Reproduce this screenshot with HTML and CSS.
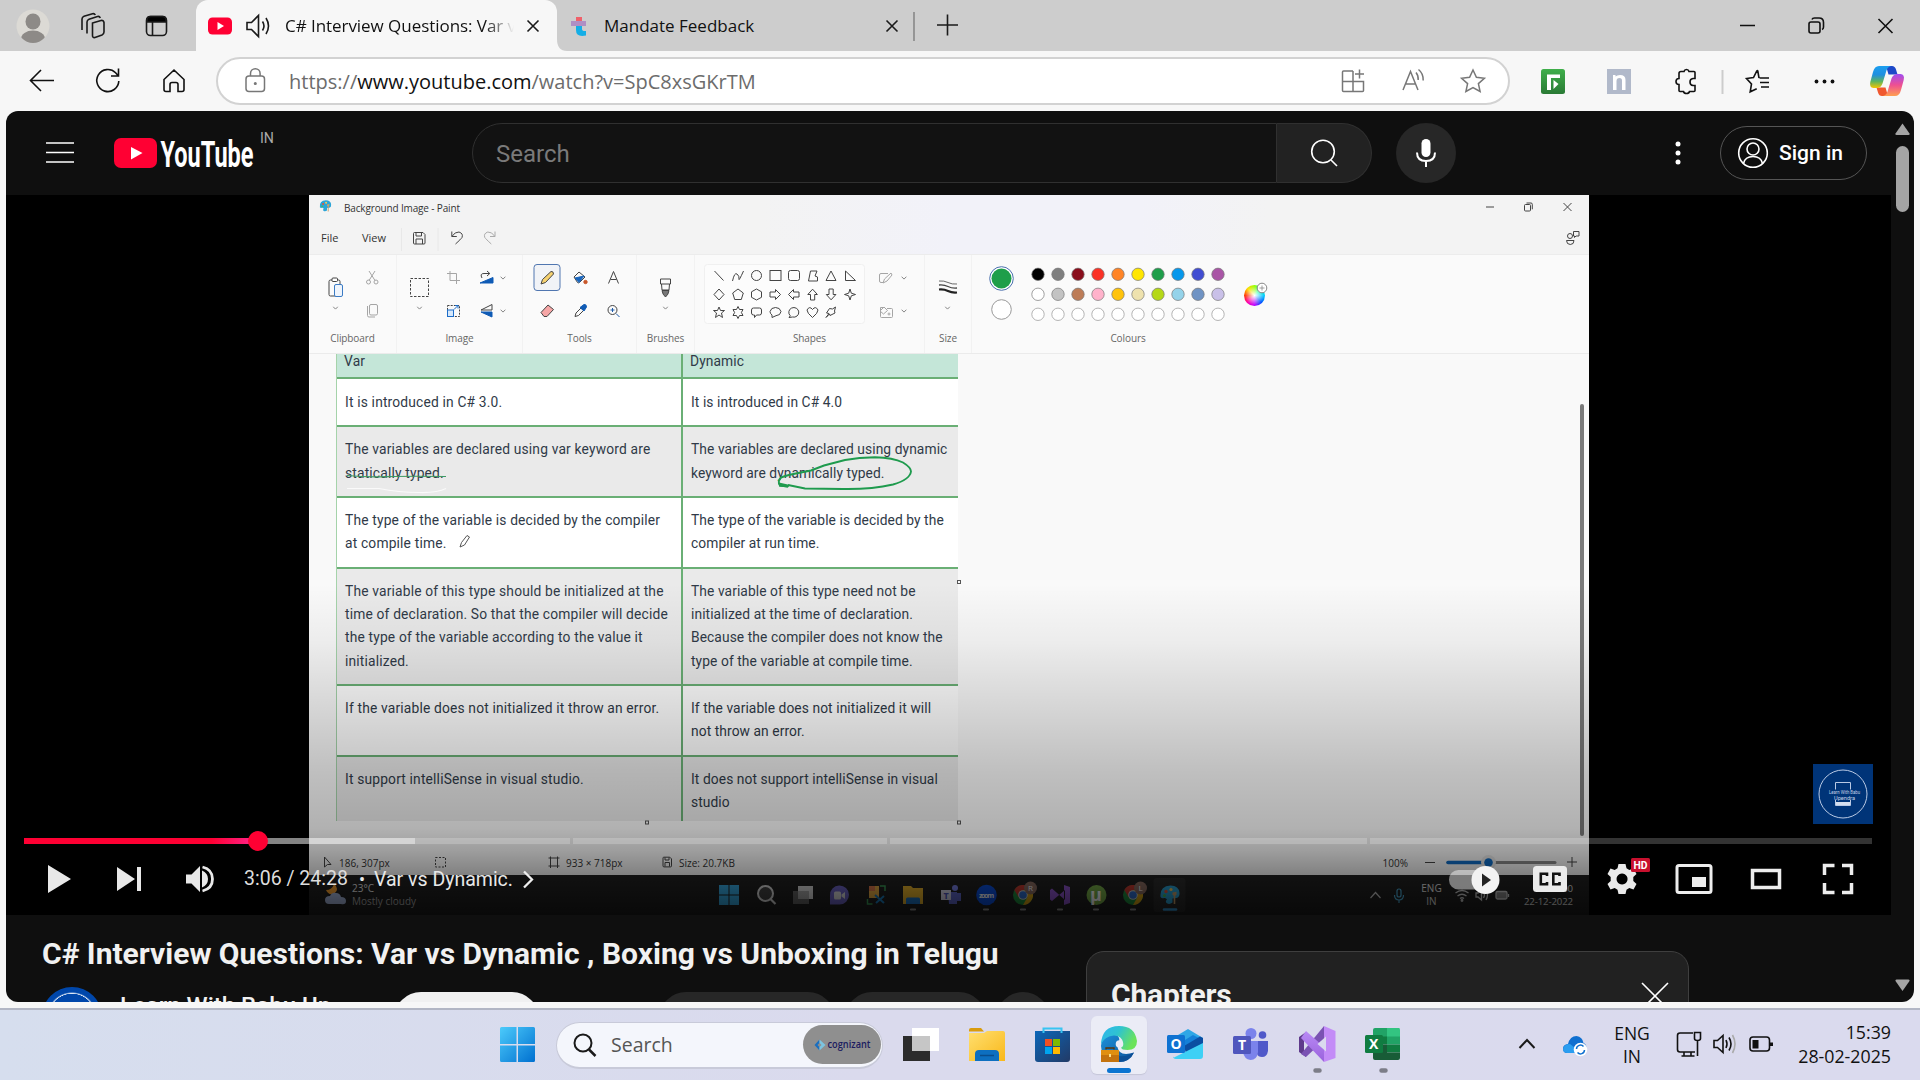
FILE: index.html
```html
<!DOCTYPE html>
<html lang="en">
<head>
<meta charset="utf-8">
<title>C# Interview Questions: Var vs Dynamic - YouTube</title>
<link rel="stylesheet" href="styles.css">
</head>
<body>
<svg width="0" height="0" class="defs">
  <defs>
    <linearGradient id="win" x1="0" y1="0" x2="1" y2="1"><stop offset="0" stop-color="#4ccbfb"/><stop offset="1" stop-color="#0070d0"/></linearGradient>
    <linearGradient id="fold" x1="0" y1="0" x2="1" y2="1"><stop offset="0" stop-color="#ffdf70"/><stop offset="1" stop-color="#f9b81a"/></linearGradient>
    <linearGradient id="store" x1="0" y1="0" x2="1" y2="1"><stop offset="0" stop-color="#0b66b8"/><stop offset="1" stop-color="#223a66"/></linearGradient>
    <linearGradient id="edgeTop" x1="0" y1="0" x2="1" y2=".4"><stop offset="0" stop-color="#2db4f0"/><stop offset=".5" stop-color="#2fc3d0"/><stop offset="1" stop-color="#6be35a"/></linearGradient>
    <linearGradient id="edgeLow" x1="0" y1="0" x2="1" y2="1"><stop offset="0" stop-color="#1d93dc"/><stop offset="1" stop-color="#0c4f97"/></linearGradient>
    <linearGradient id="vs" x1="0" y1="0" x2="0" y2="1"><stop offset="0" stop-color="#b98af5"/><stop offset="1" stop-color="#9a62dd"/></linearGradient>
    <linearGradient id="cop1" x1="0" y1="0" x2="0" y2="1"><stop offset="0" stop-color="#1b9ff0"/><stop offset=".4" stop-color="#1f8fe0"/><stop offset=".7" stop-color="#5cb460"/><stop offset="1" stop-color="#f5c400"/></linearGradient>
    <linearGradient id="cop2" x1="0" y1="0" x2="0" y2="1"><stop offset="0" stop-color="#a04cf0"/><stop offset=".5" stop-color="#ee4f92"/><stop offset="1" stop-color="#ffa050"/></linearGradient>
    <linearGradient id="ext" x1="0" y1="0" x2="0" y2="1"><stop offset="0" stop-color="#3faf4a"/><stop offset="1" stop-color="#2a7a35"/></linearGradient>
    <symbol id="chev" viewBox="0 0 6 4"><path d="M.6.7 3 3.1 5.4.7" fill="none" stroke="currentColor" stroke-width=".9"/></symbol>
    <symbol id="chrome" viewBox="0 0 20 20"><circle cx="10" cy="10" r="10" fill="#1e8e3e"/><path d="M1.300 5A10 10 0 0 1 18.700 5H10L5.700 12.500Z" fill="#c5392f"/><path d="M18.700 5A10 10 0 0 1 10 20l4.300-7.500L10 5Z" fill="#d9a514"/><circle cx="10" cy="10" r="4.800" fill="#ccc"/><circle cx="10" cy="10" r="3.800" fill="#2f6fd0"/></symbol>
    <symbol id="palette" viewBox="0 0 20 20"><path d="M.5 12Q-.5 1 10.500.5 19 .5 19.500 8q.3 4-3 5l-4 .5v4q-3 2.500-6 .5-1.500-1.500.5-3.500-1-2-3-1.500-2 .8-3.500-1z" fill="#2ba5d8"/><circle cx="6" cy="6.500" r="1.700" fill="#e2553d"/><circle cx="11" cy="4.500" r="1.600" fill="#fc5"/><circle cx="4.500" cy="10.500" r="1.500" fill="#4b5"/><path d="m12.500 7.500 4-.8v3l-1.200 1V19h-1.600v-8.300l-1.200-1z" fill="#c9a06c"/></symbol>
  </defs>
</svg>

<div class="tabs">
  <svg width="65" height="51"><clipPath id="av"><ellipse cx="33" cy="26" rx="16" ry="17"/></clipPath><circle cx="33" cy="26" r="16.500" fill="#dcdad5"/><g clip-path="url(#av)" fill="#8d8a87"><ellipse cx="33" cy="21.500" rx="7.500" ry="8"/><ellipse cx="33" cy="39" rx="12" ry="8.500"/></g></svg>
  <svg width="60" height="51" viewBox="65 0 60 51" class="line"><path d="m92.500 23 8.500-2.500q2.500-.5 3 2v9.500q0 2-2 3l-7 2.500q-2.500.5-2.500-2zM87 33.500V22q0-2 2-2.800l8.500-2.700q2-.5 2.800 1.500M82 30V19q0-2 2-2.800l8.500-2.500q2-.4 2.800 1.300"/></svg>
  <svg width="71" height="51" viewBox="125 0 71 51" class="line"><rect x="146.500" y="16.500" width="20" height="19" rx="4"/><path d="M147 22v-2q0-3.500 3.500-3.500h12q3.500 0 3.500 3.500v2z" fill="#000"/><path d="M152.500 22v13"/></svg>
  <div class="tab active">
    <svg width="89" height="51" viewBox="196 0 89 51"><rect x="208" y="17.500" width="24" height="17" rx="4.500" fill="#ff0033"/><path d="m217.500 22 6.500 4-6.500 4z" fill="#fff"/><g class="line"><path d="M247 22.500h4.500l7-7v21l-7-7H247zM262.500 21.500q3 4.500 0 9M266 18q5 8 0 16"/></g></svg>
    <span class="tab-title fade">C# Interview Questions: Var vs</span>
    <svg width="43" height="51" viewBox="514 0 43 51" class="line"><path d="m527.500 20.500 11 11m0-11-11 11"/></svg>
  </div>
  <div class="tab">
    <svg width="47" height="51" viewBox="557 0 47 51"><path d="M557 39v12h10q-10 0-10-12z" fill="#f7f7f7"/><path d="M576 17h6v7h-6z" fill="#f0606a"/><path d="M571 21h15v5h-15z" fill="#b08fc4"/><path d="M576 26h6v3q0 2.500 4 2v4.500q-10 2-10-5.500z" fill="#14aee6"/></svg>
    <span class="tab-title second">Mandate Feedback</span>
    <svg width="160" height="51" viewBox="755 0 160 51" class="line"><path d="m886.500 20.500 11 11m0-11-11 11"/><path d="M914 12v29" stroke="#888"/></svg>
  </div>
  <svg width="60" height="51" viewBox="915 0 60 51" class="line"><path d="M937 25h21M947.500 14.500v21"/></svg>
  <div class="grow"></div>
  <svg width="200" height="51" viewBox="1720 0 200 51" class="line dark"><path d="M1740 25.500h15M1878.500 19l14 14m0-14-14 14"/><rect x="1809" y="22" width="11" height="11" rx="2"/><path d="M1812 19.500q.5-1.500 2.500-1.500h4.500q4.500 0 4.500 4.500v4.500q0 2-1.500 2.500"/></svg>
</div>

<div class="toolbar">
  <svg width="216" height="60" viewBox="0 51 216 60" class="line dark"><path d="M54 80.500H31M41 70 30.500 80.500 41 91M118.800 81a11 11 0 1 1-3.200-8.200L118 75.500M118.500 68.500v7.500h-7.500M164 79.500l10-9.500 10 9.500v10q0 2-2 2h-4v-7q0-2-2-2h-4q-2 0-2 2v7h-4q-2 0-2-2z"/></svg>
  <div class="address">
    <svg width="71" height="44" viewBox="218 59 71 44" class="line grey"><rect x="246" y="76" width="18.500" height="15.500" rx="3"/><path d="M250.500 76v-2.500a4.800 4.800 0 0 1 9.600 0V76"/><circle cx="255.300" cy="83.500" r=".8"/></svg>
    <span class="url">https://<b>www.youtube.com</b>/watch?v=SpC8xsGKrTM</span>
    <div class="grow"></div>
    <svg width="181" height="44" viewBox="1327 59 181 44" class="line grey"><path d="M1353 71h-9.500q-1 0-1 1v18.500q0 1 1 1h19q1 0 1-1V81.500h-21M1353 71v20.500M1359.500 69.500v9m-4.500-4.500h9"/><path d="m1403 90 7.500-18.500 7.500 18.500M1405.800 84h9.500M1416 72.500q2.500 3 2.200 7.500M1418.500 69.500q5 4 4.700 11"/><path d="m1473 70 3.400 7.300 8 .9-6 5.400 1.700 7.900-7.100-4-7.100 4 1.700-7.900-6-5.400 8-.9z"/></svg>
  </div>
  <svg width="410" height="60" viewBox="1510 51 410 60"><rect x="1541" y="69" width="24" height="25" rx="2.500" fill="url(#ext)"/><path d="M1547 90V74.500h13v3.500h-9V90z" fill="#fff"/><path d="m1553.500 80 5 4-5 5z" fill="#fff"/><rect x="1607" y="69" width="24" height="25" fill="#b1b9ca"/><path d="M1613 90V75h2.500v1.500Q1617 75 1620 75q5.500 0 5.500 5v10h-3.500V80.500q0-2.500-2.500-2.500-3 0-3 3V90z" fill="#fff"/>
    <g class="line dark"><path d="M1679 73.500q0-2 2-2h3q.5-2 2.500-2t2.500 2h5q1 0 1 1v6h-2q-3 .3-3 3.500t3 3.500h2v5q0 1-1 1h-4.500q-.5 2-3 2t-3-2h-3.500q-1 0-1-1v-6q-3 0-3-3t3-3z"/><path d="m1769 82.500h-9m9-4.500h-9.500m9.500 9h-8M1759 78l-1.200-7q-.3-.8-1 0l-3.300 6.500-7 1 5 5.500-1.300 7.800 6.500-3"/></g>
    <path d="M1722.500 70v24" stroke="#ccc" stroke-width="2"/><g fill="#111"><circle cx="1816.500" cy="81.500" r="1.900"/><circle cx="1824.500" cy="81.500" r="1.900"/><circle cx="1832.500" cy="81.500" r="1.900"/></g>
    <path d="M1886 66h6q3 0 4 3.500l1.500 5h-9z" fill="#1d48c8"/><path d="M1888 96h-6q-3 0-4-3.500l-1.500-5h9z" fill="#f0582f"/><path d="M1879 66h12q-4 1-5 6l-3.500 11.500q-1.500 4-5 4.500h-4q-4.500-.5-3.200-6l2.700-10q1.500-6 6-6z" fill="url(#cop1)"/><path d="M1895 96h-12q4-1 5-6l3.500-11.500q1.500-4 5-4.500h4q4.500.5 3.200 6l-2.700 10q-1.500 6-6 6z" fill="url(#cop2)"/></svg>
</div>

<div class="page">
  <div class="masthead">
    <svg width="274" height="84" viewBox="6 111 274 84"><path d="M46 143h28M46 152.500h28M46 162h28" stroke="#fff" stroke-width="1.600"/><rect x="114" y="138" width="43" height="30" rx="7" fill="#ff0033"/><path d="m131 147 11.500 6-11.500 6.500z" fill="#fff"/><text x="160.500" y="167" class="wordmark" textLength="93" lengthAdjust="spacingAndGlyphs">YouTube</text><text x="260" y="143" class="country" textLength="14" lengthAdjust="spacingAndGlyphs">IN</text></svg>
    <div class="search-box">Search</div>
    <div class="search-btn"><svg width="30" height="30" viewBox="1309 138 30 30" class="line white"><circle cx="1323" cy="151.500" r="11.300"/><path d="m1331 160 6 6"/></svg></div>
    <div class="mic"><svg width="30" height="32" viewBox="1411 137 30 32"><rect x="1421.500" y="139" width="9" height="18" rx="4.500" fill="#fff"/><path d="M1417 152.500q0 8.500 9 8.500t9-8.500M1426 161v6" fill="none" stroke="#fff" stroke-width="2"/></svg></div>
    <div class="grow"></div>
    <svg width="62" height="84" viewBox="1658 111 62 84" fill="#fff"><circle cx="1678" cy="144" r="2.500"/><circle cx="1678" cy="153" r="2.500"/><circle cx="1678" cy="162" r="2.500"/></svg>
    <div class="signin"><svg width="32" height="32" viewBox="1737 137 32 32" class="line white"><circle cx="1753" cy="153" r="14.300"/><circle cx="1753" cy="149" r="6"/><path d="M1743.500 163.500q1.500-7 9.500-7t9.500 7"/></svg><span>Sign in</span></div>
  </div>

  <div class="player">
    <div class="frame">
      <div class="p-title">
        <svg width="35" height="27" viewBox="309 195 35 27"><use href="#palette" x="319.500" y="200" width="12" height="12"/></svg>
        <span>Background Image - Paint</span><div class="grow"></div>
        <svg width="109" height="27" viewBox="1480 195 109 27" class="thin"><path d="M1486 207h8M1563.500 203l8 8m0-8-8 8"/><rect x="1524.500" y="204.500" width="6" height="6.500" rx="1"/><path d="M1526.500 203h4.500q1.300 0 1.300 1.300v5"/></svg>
      </div>
      <div class="p-menu">
        <span class="m-file">File</span><span class="m-view">View</span>
        <svg width="110" height="34" viewBox="396 221 110 34" class="thin"><path d="M401.500 228v23M438 228v23" stroke="#e8e8e8"/><path d="M413.500 233.500q0-1 1-1h8.500l2 2v8.500q0 1-1 1h-9.500q-1 0-1-1zM416 233v3h5.500v-3M416 244v-5h6.500v5"/><path d="M451.800 231.500v5h5M452 236.300q3-4.600 7-4.300 4.500 1.500 3 5.500-1 1.500-6.500 6.500"/><path d="M495 231.500v5h-5M494.800 236.300q-3-4.600-7-4.300-4.500 1.500-3 5.500 1 1.500 6.500 6.500" stroke="#aaa"/></svg>
        <div class="grow"></div>
        <svg width="30" height="34" viewBox="1559 221 30 34" class="thin"><circle cx="1570" cy="236" r="2.500"/><path d="M1566.500 240.500h7.500q0 4-3.700 4t-3.800-4zM1573.500 231.500h5.500v4.500h-3l-1.500 1.500v-1.500h-1z"/></svg>
      </div>
      <div class="ribbon">
        <div class="group g-clip"><svg width="87" height="75" viewBox="309 255 87 75" class="thin"><rect x="329" y="280" width="11" height="16" rx="1.500"/><rect x="332" y="278" width="5.500" height="3.500" rx="1" fill="#fff"/><rect x="334.500" y="284.500" width="8" height="12" rx="1.500" fill="#eef4fc" stroke="#3b7bc4"/><use href="#chev" x="332.500" y="306" width="6" height="4"/><g stroke="#a5a5a5"><path d="m369 271 6 9.500m0-9.500-6 9.500"/><circle cx="368.500" cy="282" r="2"/><circle cx="376" cy="282" r="2"/><rect x="369.500" y="304.500" width="8" height="10.500" rx="1.500"/><path d="M367.500 306v9.500q0 1.500 1.500 1.500h6"/></g></svg><label>Clipboard</label></div>
        <div class="group g-img"><svg width="126" height="75" viewBox="397 255 126 75" class="thin"><rect x="410.500" y="278.500" width="18" height="18" stroke-dasharray="2.500 1.500"/><use href="#chev" x="416.500" y="306" width="6" height="4"/><path d="M450 271v9.500h10M447 273.500h9.500V284" stroke="#a5a5a5"/><path d="M480 283h13v-5.500z" fill="#0f5bb5" stroke="#0f5bb5"/><path d="M482 278q-2.500-4.500 2-4.500h5.500M487 271l2.800 2.500-2.800 2.500"/><use href="#chev" x="500" y="276" width="6" height="4"/><rect x="447.500" y="305.500" width="12" height="11" stroke-dasharray="2 1.200"/><rect x="447.500" y="310" width="6" height="6.500" stroke="#1c6cc8" fill="#d6e8fb"/><path d="m454 309.500 4-4m-3 0h3v3" stroke="#1c6cc8"/><path d="M492 304.500v5.500h-11z"/><path d="M492 317v-5h-11z" fill="#0f5bb5" stroke="#0f5bb5"/><use href="#chev" x="500" y="309" width="6" height="4"/></svg><label>Image</label></div>
        <div class="group g-tools"><svg width="114" height="75" viewBox="523 255 114 75" class="thin"><rect x="534" y="264.500" width="26" height="26" rx="3" fill="#f1f3f7" stroke="#5076b0"/><path d="m541 284 1.500-4.500 8.500-8q2.500-.5 2.500 2.500l-8 8.500z" fill="#f6d270"/><path d="m574 277 5-5 6 5-5.500 5.500q-1 .8-2 0z"/><path d="m575 278 9-2-5 6.500z" fill="#1865bd" stroke="#1865bd"/><circle cx="585.500" cy="282" r="1.700" fill="#c9572a" stroke="#c9572a"/><path d="m608.500 283.500 5-12 5 12M610.500 279.500h6"/><path d="m541 312.500 7-7.500 5.500 4.500-6.500 7h-3z" fill="#f6a6a6"/><path d="m575 316.500 1-3.500 5-5 2.500 2.500-5 5z"/><path d="m580 307.500 4-3q2.500-.5 2.500 2.500l-2.500 4z" fill="#0f5bb5" stroke="#0f5bb5"/><circle cx="612.500" cy="310" r="4.500"/><path d="m616 313.500 3.500 3.500M610.500 310h4m-2-2v4" stroke="#1c5aa8"/></svg><label>Tools</label></div>
        <div class="group g-brush"><svg width="58" height="75" viewBox="637 255 58 75" class="thin"><path d="M660.500 279h10v5h-10zM661.500 284l.5 6h7l.5-6"/><path d="M662 290.500h7q-.5 4-3.500 6.500-3-2.500-3.500-6.500z" fill="#777"/><use href="#chev" x="662.500" y="306" width="6" height="4"/></svg><label>Brushes</label></div>
        <div class="group g-shapes"><svg width="230" height="75" viewBox="695 255 230 75" class="thin"><rect x="704.500" y="264.500" width="160" height="59" rx="3" stroke="#f0f0f0" fill="#fcfcfc"/>
          <path d="m714.500 271 9 9.500M732.500 281q2-9 4.500-7t2 5 4.500-8"/><circle cx="756.500" cy="275.500" r="5"/><rect x="770" y="270.500" width="11" height="10"/><rect x="788.500" y="270.500" width="11" height="10" rx="2"/><path d="M808.500 281l2-10h6.500l-2 5 2.500 1v4zM831 271l5 9.500h-10zM845.500 271v9.500h10z"/>
          <path d="m719 289 5 5.500-5 5.500-5-5.500zM738 289l5.300 4-2 6.500h-6.600l-2-6.500zM756.500 289l5 2.800v5.500l-5 2.700-5-2.700v-5.500zM770 292h5.500v-2.500l5 5-5 5V297H770zM799 292h-5.500v-2.500l-5 5 5 5V297h5.500zM810.500 300v-5.500h-2.700l4.800-5.300 4.800 5.300h-2.700v5.500zM829 289v5.500h-2.700l4.800 5.300 4.800-5.300h-2.700V289zM850 289l1.300 4.200 4.200 1.300-4.200 1.300L850 300l-1.300-4.200-4.200-1.300 4.200-1.300z"/>
          <path d="m719 307 1.500 3.500h4l-3 2.500 1 4.500-3.500-2.500-3.500 2.500 1-4.500-3-2.500h4zM738 306.500l1.500 3h3.500l-1.600 3 1.600 3h-3.500l-1.500 3-1.500-3H733l1.600-3-1.600-3h3.500zM753.500 308h6q2 0 2 2v3q0 2-2 2h-3l-2 2.500V315h-1q-2 0-2-2v-3q0-2 2-2zM772 317.500v-2.500q-2-1.500-2-3.500 1-4 5.500-4t5.500 4q-.5 4-5 4.200zM789 317.500l1.300-1.700a5 4.800 0 1 1 2.200 1.200zM812.500 317.500q-5.500-4.500-5.500-7.500 2.500-4.500 5.500-.5 3-4 5.500.5 0 3-5.500 7.500zM826 317.500l3-4-2.500-.5 3-4.500 3 .5 3-2-1 4 .5 2-5 2.500-.5-1.500z"/>
          <g stroke="#a5a5a5"><path d="M888 273.500h-7q-1.500 0-1.500 1.500v6q0 1.500 1.500 1.500h2M883 283l1.500-4 6.500-6 1 2-5 6z"/><path d="M883 307.500h-2.500v9q0 1 1 1h10q1 0 1-1v-7q0-1-1-1H887M880 311l4-4 3.500 3.500-4 3.500z"/><circle cx="889" cy="314" r="1"/></g><use href="#chev" x="901" y="276" width="6" height="4"/><use href="#chev" x="901" y="309" width="6" height="4"/></svg><label>Shapes</label></div>
        <div class="group g-size"><svg width="47" height="75" viewBox="925 255 47 75" class="thin"><path d="M939 281q5-.5 9 1.500t9 1.500" stroke-width=".8"/><path d="M939 285q5-.5 9 1.500t9 1.500" stroke-width="1.300"/><path d="M939 289.500q5-.5 9 1.500t9 1.500" stroke="#222" stroke-width="2.200"/><use href="#chev" x="944.500" y="306" width="6" height="4"/></svg><label>Size</label></div>
        <div class="group g-col">
          <svg width="314" height="75" viewBox="971 255 314 75"><circle cx="1001.500" cy="278.500" r="11.800" fill="#fff" stroke="#4a6fae"/><circle cx="1001.500" cy="278.500" r="10" fill="#1e9e4a"/><circle cx="1001.500" cy="309.500" r="9.800" fill="#fff" stroke="#999"/>
            <g stroke="#777" stroke-width=".7"><circle cx="1038" cy="274.300" r="6.200" fill="#000"/><circle cx="1058" cy="274.300" r="6.200" fill="#7f7f7f"/><circle cx="1078" cy="274.300" r="6.200" fill="#8a0e1c"/><circle cx="1098" cy="274.300" r="6.200" fill="#fb3226"/><circle cx="1118" cy="274.300" r="6.200" fill="#ff8426"/><circle cx="1138" cy="274.300" r="6.200" fill="#ffe600"/><circle cx="1158" cy="274.300" r="6.200" fill="#1e9e4a"/><circle cx="1178" cy="274.300" r="6.200" fill="#0698ec"/><circle cx="1198" cy="274.300" r="6.200" fill="#414dd2"/><circle cx="1218" cy="274.300" r="6.200" fill="#a955a6"/>
            <circle cx="1038" cy="294.300" r="6.200" fill="#fff"/><circle cx="1058" cy="294.300" r="6.200" fill="#c3c3c3"/><circle cx="1078" cy="294.300" r="6.200" fill="#bd7c57"/><circle cx="1098" cy="294.300" r="6.200" fill="#ffb2cb"/><circle cx="1118" cy="294.300" r="6.200" fill="#ffc30b"/><circle cx="1138" cy="294.300" r="6.200" fill="#eee2ae"/><circle cx="1158" cy="294.300" r="6.200" fill="#b5d817"/><circle cx="1178" cy="294.300" r="6.200" fill="#94d3ea"/><circle cx="1198" cy="294.300" r="6.200" fill="#6f93c4"/><circle cx="1218" cy="294.300" r="6.200" fill="#c9c0e8"/></g>
            <g fill="#fff" stroke="#aaa" stroke-width=".9"><circle cx="1038" cy="314.300" r="6.200"/><circle cx="1058" cy="314.300" r="6.200"/><circle cx="1078" cy="314.300" r="6.200"/><circle cx="1098" cy="314.300" r="6.200"/><circle cx="1118" cy="314.300" r="6.200"/><circle cx="1138" cy="314.300" r="6.200"/><circle cx="1158" cy="314.300" r="6.200"/><circle cx="1178" cy="314.300" r="6.200"/><circle cx="1198" cy="314.300" r="6.200"/><circle cx="1218" cy="314.300" r="6.200"/></g>
            <foreignObject x="1244" y="285" width="21" height="21"><div class="wheel"></div></foreignObject><circle cx="1262" cy="288" r="4.800" fill="#fff" stroke="#888"/><path d="M1259.500 288h5m-2.500-2.500v5" stroke="#888" stroke-width=".8"/></svg><label>Colours</label></div>
      </div>

      <div class="canvas">
        <div class="sheet">
          <div class="row head"><p>Var</p><p>Dynamic</p></div>
          <div class="row first"><p>It is introduced in C# 3.0.</p><p>It is introduced in C# 4.0</p></div>
          <div class="row alt"><p>The variables are declared using var keyword are<br>statically typed.</p><p>The variables are declared using dynamic<br>keyword are dynamically typed.</p></div>
          <div class="row"><p>The type of the variable is decided by the compiler<br>at compile time.</p><p>The type of the variable is decided by the<br>compiler at run time.</p></div>
          <div class="row alt"><p>The variable of this type should be initialized at the<br>time of declaration. So that the compiler will decide<br>the type of the variable according to the value it<br>initialized.</p><p>The variable of this type need not be<br>initialized at the time of declaration.<br>Because the compiler does not know the<br>type of the variable at compile time.</p></div>
          <div class="row"><p>If the variable does not initialized it throw an error.</p><p>If the variable does not initialized it will<br>not throw an error.</p></div>
          <div class="row alt last"><p>It support intelliSense in visual studio.</p><p>It does not support intelliSense in visual<br>studio</p></div>
        </div>
        <div class="grow"></div>
        <div class="vscroll"></div>
        <svg class="ink" width="1280" height="492" viewBox="309 353 1280 492"><path d="M347 475.500q20 2 40 1.200t59-.2" stroke="#3f9a62" stroke-width="1.200"/><path d="M347 488.500h32q20 4 40 4 18 .5 27-4" stroke="#fafafa" stroke-width="1.200"/><path d="M788 486.500l-8-1q-3-4 1-8 6-2.500 20-5l10-2 13-5 21-5.500q14-2.500 30-2.800 18 .3 28 5.300 8 5 8 9-1 8-18 13-22 5-50 4.500l-38-.5-17-3.500" stroke="#1f9b4e" stroke-width="1.900"/><path d="m779 482.500 11 2.500-2 2.500-9-1z" fill="#1f9b4e"/><path d="m460 547 1.500-4.500 5.500-7 2.500 1.500-5 8z" stroke="#555"/><g stroke="#555"><rect x="957.500" y="580.500" width="3" height="3"/><rect x="957.500" y="821" width="3" height="3"/><rect x="645.500" y="821" width="3" height="3"/></g></svg>
      </div>

      <div class="p-status">
        <svg width="30" height="30" viewBox="309 845 30 30" class="thin"><path d="M324.500 857v10l3-2.500h3.500z"/></svg><span class="s-pos">186, 307px</span>
        <svg width="180" height="30" viewBox="386 845 180 30" class="thin"><rect x="435.500" y="857.500" width="10" height="9.500" stroke-dasharray="2 1.500"/><path d="M550.500 856.500v11.500M557.500 856.500v11.500M548.500 858h11M548.500 866h11"/></svg><span class="s-dim">933 × 718px</span>
        <svg width="59" height="30" viewBox="620 845 59 30" class="thin"><path d="M663 858q0-.8.800-.8h6l1.700 1.700v7q0 1-1 1H664q-1 0-1-1zM665 857.500v2.500h4v-2.500M665 866.500v-4h4.500v4"/></svg><span>Size: 20.7KB</span>
        <div class="grow"></div><span class="s-zoom">100%</span>
        <svg width="180" height="30" viewBox="1409 845 180 30" class="thin"><path d="M1425 862.500h10M1567 862h10m-5-5v10"/><path d="M1448 862.500h107" stroke="#888" stroke-width="3" stroke-linecap="round"/><path d="M1448 862.500h36" stroke="#0f6cc4" stroke-width="3.500" stroke-linecap="round"/><circle cx="1488.500" cy="862.500" r="7.500" fill="#e6e6e6" stroke="none"/><circle cx="1488.500" cy="862.500" r="4.300" fill="#0f6cc4" stroke="none"/></svg>
      </div>
      <div class="p-task">
        <svg width="43" height="40" viewBox="309 875 43 40"><path d="M334 884q-2 6-8 6 2 5 7 4 4-2 4-5t-3-5z" fill="#ffa530"/><path d="M329 904q-4 0-4-4t5-4q2-4 6-3 4 0 5 4 5 0 5 4t-5 3z" fill="#aebfe6"/></svg>
        <div class="weather"><div>23°C</div><div class="dim">Mostly cloudy</div></div>
        <svg width="490" height="40" viewBox="700 875 490 40">
          <path d="M719 885h9.500v9.500H719zM729.500 885h9.500v9.500h-9.500zM719 895.500h9.500v9.500H719zM729.500 895.500h9.500v9.500h-9.500z" fill="#38aee8"/>
          <circle cx="765.500" cy="893.500" r="7.500" fill="#444" stroke="#ddd" stroke-width="2"/><path d="m770.500 899 5 5" stroke="#ddd" stroke-width="2.200"/>
          <path d="M793 891h16v13h-16z" fill="#666"/><path d="M798 886h15v13h-15z" fill="#ddd"/><path d="M798 891h11v8h-11z" fill="#aaa"/>
          <path d="M830 904.500v-9a9.500 9.500 0 1 1 9.500 9z" fill="#6f66c8"/><rect x="834" y="891.500" width="7" height="8" rx="1.500" fill="#ddd"/><path d="m841.500 894.500 3.500-2.500v7l-3.500-2.500z" fill="#ddd"/>
          <path d="M869 886h10v12h-10z" fill="#eab045"/><path d="M869 886h6v5h-6z" fill="#e07a4c"/><path d="M867.500 899v5h5M880 886h5v5" fill="none" stroke="#3ba05a" stroke-width="1.500"/><path d="m875 895 9 8m0-7-8 7" stroke="#1b7fc0" stroke-width="2"/>
          <path d="M903 886h8l2 2h10v16h-20z" fill="#eab52c"/><path d="M906 899q0-1.500 1.500-1.500h11q1.500 0 1.500 1.500v5h-14z" fill="#1e77c8"/>
          <circle cx="955" cy="888" r="3" fill="#7b83eb"/><path d="M948 892h9v12h-8zM957 893h4v8h-4z" fill="#6068cc"/><path d="M941 890h10v10h-10z" fill="#d8d8ec"/><text x="943.500" y="898.500" font-size="9" font-weight="700" fill="#4b53bc">T</text>
          <circle cx="986.500" cy="895" r="10.300" fill="#0b50e0"/><text x="979" y="897.500" font-size="7" font-weight="700" fill="#fff" textLength="15">zoom</text>
          <use href="#chrome" x="1013" y="885" width="20" height="20"/><circle cx="1030.500" cy="888" r="6.500" fill="#8d6e63"/><text x="1028" y="891" font-size="8" fill="#fff">R</text>
          <path d="m1050 890 2-1.500 13 11.500v-10l-13 11-2-1.500zM1064 885l6 2v16l-6 2z" fill="#8f55cf"/>
          <circle cx="1096.500" cy="895" r="10" fill="#79b04a"/><text x="1090" y="901" font-size="18" font-weight="700" fill="#fff">µ</text>
          <use href="#chrome" x="1123" y="885" width="20" height="20"/><circle cx="1140.500" cy="888" r="6.500" fill="#8d6e63"/><text x="1138.500" y="891" font-size="8" fill="#fff">L</text>
          <rect x="1153.500" y="878" width="32" height="34" rx="3" fill="#2b2b2b"/><use href="#palette" x="1160" y="885" width="20" height="20"/><path d="M1164 909.500h12" stroke="#36a3e6" stroke-width="2.500" stroke-linecap="round"/>
          <path d="M911 909.500h4M984 909.500h4M1021 909.500h4M1058 909.500h4M1094 909.500h4M1131 909.500h4" stroke="#999" stroke-width="2.200" stroke-linecap="round"/></svg>
        <div class="grow"></div>
        <svg width="45" height="40" viewBox="1368 875 45 40" fill="none" stroke="#ccc" stroke-width="1.200"><path d="m1370.500 898 5-5.500 5 5.500"/><rect x="1397" y="889" width="4" height="8" rx="2" stroke="#4fb0dc"/><path d="M1394.500 895q0 5 4.500 5t4.500-5M1399 900v3" stroke="#4fb0dc"/></svg>
        <div class="lang"><div>ENG</div><div>IN</div></div>
        <svg width="72" height="40" viewBox="1450 875 72 40" fill="none" stroke="#ccc" stroke-width="1.300"><path d="M1455.500 893q6.500-5 13 0M1457.500 896q4.500-3.500 9 0M1460 898.500q2-1.500 4 0"/><circle cx="1462" cy="900.500" r=".8"/><path d="M1476 893h2l3.500-3v10l-3.500-3h-2zM1483.500 892q2 3 0 6M1486 890q3 5 0 10"/><rect x="1496" y="891.500" width="11" height="7.500" rx="1.500" fill="#888"/><path d="M1508.500 894v3"/></svg>
        <div class="clock"><div>23:00</div><div>22-12-2022</div></div>
      </div>
    </div>

    <div class="shade"></div>
    <div class="watermark"><svg width="60" height="60"><g fill="none" stroke="#b9c9e4"><circle cx="30" cy="30" r="24"/><path d="M22.500 25.500v-7h15v7M22.500 36v5.500h15V36"/></g><path d="M23 38h14v3H23z" fill="#d5deee"/><text x="16" y="30" class="mark" textLength="31" lengthAdjust="spacingAndGlyphs">Learn With Babu</text><text x="21" y="35.500" class="mark" textLength="21" lengthAdjust="spacingAndGlyphs">Upendra</text></svg></div>
    <div class="controls">
      <div class="progress"><i class="c1"></i><i class="c2"></i><i class="c3"></i><i class="c4"></i><b class="loaded"></b><b class="played"></b><b class="knob"></b></div>
      <div class="buttons">
        <svg width="220" height="56" viewBox="24 851 220 56" fill="#e8e8e8"><path d="m48 865 23 14-23 14zM117 867l18 12-18 12zM137 867h4v24h-4zM186 874.500h5.500l8.500-8.500v26l-8.500-8.500H186zM202 870.500q6 2.500 6 8.500t-6 8.500z"/><path d="M202.500 867q10 2.500 10 12t-10 12" fill="none" stroke="#e8e8e8" stroke-width="2.800"/></svg>
        <span class="time">3:06 / 24:28</span><span class="bullet">•</span><span class="chap">Var vs Dynamic.</span>
        <svg width="24" height="56" viewBox="513 851 24 56"><path d="m524 871.500 8 8-8 8" fill="none" stroke="#eee" stroke-width="2.300"/></svg>
        <div class="grow"></div>
        <svg width="440" height="56" viewBox="1432 851 440 56"><rect x="1449" y="870" width="44" height="19.500" rx="9.500" fill="#fff" opacity=".45"/><circle cx="1485.500" cy="880" r="14" fill="#f2f2f2"/><path d="m1482 873.500 9 6.500-9 6.500z" fill="#222"/>
          <rect x="1533" y="866" width="34" height="26" rx="3.500" fill="#ebebeb"/><g fill="none" stroke="#111" stroke-width="2.600"><path d="M1547 876v-2.200h-6.200v10.400h6.200V882M1559.500 876v-2.200h-6.200v10.400h6.200V882"/></g>
          <path d="M1618.500 864h7l1 4.300 2.800 1.600 4.200-1.400 3 5.500-3.200 3v4l3.200 3-3 5.500-4.200-1.400-2.800 1.600-1 4.300h-7l-1-4.300-2.800-1.600-4.200 1.400-3-5.500 3.200-3v-4l-3.200-3 3-5.500 4.200 1.400 2.800-1.600zM1622 873.500a5.500 5.500 0 1 0 .1 0z" fill="#eaeaea" fill-rule="evenodd"/>
          <rect x="1631" y="858" width="19" height="14" rx="1.500" fill="#c8102e"/><text x="1633.500" y="869" class="hd" textLength="14" lengthAdjust="spacingAndGlyphs">HD</text>
          <g fill="none" stroke="#ededed" stroke-width="3"><rect x="1677" y="865.500" width="34" height="27" rx="2"/><rect x="1752.500" y="870.500" width="27" height="17" stroke-width="3.500"/><path d="M1824.500 875v-9.500h10M1842 865.500h9.500v9.500M1851.500 883v9.500h-9.500M1834.500 892.500h-10V883" stroke-width="3.500"/></g><path d="M1692 877h14v10h-14z" fill="#ededed"/></svg>
      </div>
    </div>
  </div>

  <div class="below">
    <div class="info">
      <h1>C# Interview Questions: Var vs Dynamic , Boxing vs Unboxing in Telugu</h1>
      <div class="owner">
        <div class="avatar"></div><span class="channel">Learn With Babu Up</span>
        <div class="pill sub"></div><div class="grow"></div><div class="pill like"></div><div class="pill share"></div><div class="pill more"></div>
      </div>
    </div>
    <div class="chapters"><span>Chapters</span><svg width="28" height="28" viewBox="0 0 28 28" class="line white"><path d="m1 1 26 26M27 1 1 27"/></svg></div>
  </div>

  <div class="scrollbar"><svg width="23" height="891" viewBox="1891 111 23 891" fill="#a5a5a5"><path d="m1902.500 123.500 7 10q.5 1.500-1 1.500h-12q-1.500 0-1-1.500z"/><rect x="1896" y="146" width="13" height="66" rx="6.500"/><path d="m1902.500 991 7-10q.5-1.500-1-1.500h-12q-1.500 0-1 1.500z"/></svg></div>
</div>

<div class="taskbar">
  <svg width="56" height="70" viewBox="500 1010 56 70"><path d="M500 1028.500q0-1.500 1.500-1.500H516.500v17H500zM518 1027h15.500q1.500 0 1.500 1.500v15.500H518zM500 1045.500h16.500v16.500h-15q-1.500 0-1.500-1.500zM518 1045.500h17v15q0 1.500-1.500 1.500H518z" fill="url(#win)"/></svg>
  <div class="tb-search"><svg width="24" height="24" viewBox="0 0 24 24" class="line"><circle cx="10" cy="10" r="8.500" stroke-width="2"/><path d="m16 16.500 6.500 6.500" stroke-width="2.500"/></svg><span>Search</span>
    <div class="badge"><svg width="78" height="39" viewBox="803 1025 78 39"><path d="m814.500 1045 5-5.500v3.500l-2 2 2 2v3.500z" fill="#1a6fc0"/><path d="m819.500 1039.500 6 5.500-6 5.500v-3.500l2-2-2-2z" fill="#7cc4e0"/><text x="827.500" y="1048" class="cogn" textLength="43" lengthAdjust="spacingAndGlyphs">cognizant</text></svg></div></div>
  <svg width="208" height="70" viewBox="883 1010 208 70"><path d="M903 1036h27v25h-27z" fill="#2c2c2c"/><path d="M912 1028h27v23h-27z" fill="#fff"/><path d="M912 1036h18v15h-18z" fill="#c6c6c6"/>
    <path d="M969 1030q0-2 2-2h10l3 3.500h-15z" fill="#d99b0c"/><path d="M969 1033h15l3-2h16q2 0 2 2v28h-36z" fill="url(#fold)"/><path d="M975 1061v-7q0-4 4-4h16q4 0 4 4v7z" fill="#0d6fc0"/><path d="M980 1055.500h14" stroke="#0a4d8c" stroke-width="1.500"/>
    <path d="M1035 1031h35v28q0 3-3 3h-29q-3 0-3-3z" fill="url(#store)"/><path d="M1043.500 1033v-4.500h18v4.500" fill="none" stroke="#38c4f2" stroke-width="2"/><path d="M1045 1039h7v7h-7z" fill="#f25022"/><path d="M1053 1039h7v7h-7z" fill="#7fba00"/><path d="M1045 1047h7v7h-7z" fill="#00a4ef"/><path d="M1053 1047h7v7h-7z" fill="#ffb900"/></svg>
  <div class="edge"><svg width="56" height="58" viewBox="1091 1016 56 58"><path d="M1101 1046q1-12 10-12 10 0 8 9-3 5 1 9 4 3.500 14 .5-5 9.500-15 9.500-17-1-18-16z" fill="url(#edgeLow)"/><path d="M1119 1056q8 1 15-3.500-4 9.500-15 9.500z" fill="#0c4f97"/><path d="M1101 1044q1-18 18-18 16 0 18 15 0 9-9.500 9-6 0-6.500-2.500 2-1.500 2-4.500-1-7.500-9-7.500-9 .5-13 8.500z" fill="url(#edgeTop)"/><circle cx="1119.500" cy="1044" r="3.800" fill="#ebecf6"/><path d="M1101 1050h18v12h-18z" fill="#c4730e"/><path d="M1101 1050h18v5h-18z" fill="#e08f10"/><path d="M1106 1049.500v-1.500h8v1.500" fill="none" stroke="#5a3408" stroke-width="1.300"/><path d="M1109 1054h2v3h-2z" fill="#fbe08a"/><path d="M1109.500 1070.500h19" stroke="#0b74d1" stroke-width="5" stroke-linecap="round"/></svg></div>
  <svg width="355" height="70" viewBox="1147 1010 355 70">
    <path d="M1173 1038l15-9 15 9v8h-30z" fill="#2fa7e6"/><path d="m1185 1040 8-5 8 4-16 11z" fill="#1480d8"/><path d="m1184 1046 16-9.500 3 1.500v6l-17 10z" fill="#0b4ea2"/><path d="M1173 1058l30-15v13q0 3-3 3H1176q-3 0-3-3z" fill="#3ed0f5"/><rect x="1167" y="1035" width="18" height="18" rx="1.500" fill="#0f72d2"/><text x="1170.500" y="1049" class="letter">O</text>
    <circle cx="1251" cy="1033.500" r="5.500" fill="#7b83eb"/><circle cx="1262.500" cy="1035" r="3.800" fill="#5059c9"/><path d="M1258 1041h10v10q-1 6-6 6-4 0-5-3z" fill="#5059c9"/><path d="M1243 1041h15v11q-1 8-7.500 8-6.500-1-7.500-8z" fill="#7b83eb"/><rect x="1233" y="1036" width="18" height="18" rx="1.500" fill="#4f56bd"/><text x="1238" y="1050" class="letter">T</text>
    <path d="M1299 1037l7-5v6l-2 1v11l2 2v5l-7-5z" fill="#5f3a8c"/><path d="M1324 1026v14l-18 17-5-3z" fill="#7a52b3"/><path d="M1306 1031l18 16v15l-23-24z" fill="url(#vs)"/><path d="M1324 1026l11.500 5v27l-11.500 4z" fill="#c38cf7"/><path d="M1326 1036.500v15l-8.500-7.500z" fill="#dadaee"/>
    <path d="M1373 1030q0-2 2-2h12v9h-14z" fill="#21a366"/><path d="M1387 1028h12q1 0 1 2v7h-13z" fill="#33c481"/><path d="M1387 1036.500h13v8h-13z" fill="#21a366"/><path d="M1373 1036.500h14v8h-14zM1387 1044.500h13v8h-13z" fill="#107c41"/><path d="M1373 1044.500h14v8h-14zM1373 1052.500h27v5.500q0 2-2 2h-23q-2 0-2-2z" fill="#185c37"/><rect x="1365" y="1035" width="18" height="18" rx="1.500" fill="#107c41"/><text x="1369" y="1049" class="letter">X</text>
    <path d="M1315.500 1070.500h4M1381.500 1070.500h4" stroke="#7c7d88" stroke-width="4.500" stroke-linecap="round"/></svg>
  <div class="grow"></div>
  <svg width="87" height="70" viewBox="1515 1010 87 70"><path d="m1519.500 1048 7.500-8 7.500 8" fill="none" stroke="#1a1a1a" stroke-width="2"/><path d="M1567 1053q-4 0-4-4.500 0-4 5-4.500 2-8 8.500-8 6 1 7 7 3 1 3 5 0 5-5 5z" fill="#0f6fd0"/><path d="M1563 1049q1-5 7-5l10 8-3 1h-10q-4-.5-4-4z" fill="#2a9df0"/><circle cx="1580.500" cy="1049.500" r="6.800" fill="#fff"/><path d="M1576.500 1049a4 4 0 0 1 7-2.500M1584.500 1050a4 4 0 0 1-7 2.500" fill="none" stroke="#0f6fd0" stroke-width="1.500"/></svg>
  <div class="tb-lang"><div>ENG</div><div>IN</div></div>
  <svg width="120" height="70" viewBox="1665 1010 120 70" class="line dark"><path d="M1693 1033h-13q-2.500 0-2.500 2.500v14q0 2.500 2.500 2.500h15M1684 1052v4M1691 1052v4M1681.500 1056h13M1694.500 1032.500h6v6q0 2-3 2t-3-2zM1697.500 1041v15"/><path d="M1714 1040.500h3.500l5.500-5v17l-5.500-5H1714zM1726 1040q2 4 0 8M1729 1037.500q4 6.500 0 13"/><path d="M1732.500 1035q5 9 0 18" stroke="#aaa"/><rect x="1750" y="1037" width="19.500" height="14" rx="3"/><path d="M1752.500 1040h6v8.500h-6z" fill="#111" stroke="none"/><path d="M1771.500 1042.500v3.500" stroke-width="3"/></svg>
  <div class="tb-clock"><div>15:39</div><div>28-02-2025</div></div>
</div>
</body>
</html>
```
FILE: styles.css
```css
* { box-sizing: border-box; }
body { margin: 0; width: 1920px; height: 1080px; overflow: hidden; display: flex; flex-direction: column; background: #f7f7f7; font-family: "Open Sans", "Noto Sans", sans-serif; color: #111; }
svg { display: block; flex: none; }
.defs { position: absolute; }
.grow { flex: 1; }
p, h1 { margin: 0; }
.line { fill: none; stroke: #1a1a1a; stroke-width: 1.6; }
.line.dark { stroke: #111; }
.line.grey { stroke: #777; stroke-width: 1.5; }
.line.white { stroke: #fff; stroke-width: 1.6; }
.thin { fill: none; stroke: #444; stroke-width: 1; color: #777; }

/* browser tabs */
.tabs { height: 51px; flex: none; display: flex; background: #cdcdcd; }
.tab { display: flex; align-items: center; }
.tab.active { background: #f7f7f7; border-radius: 12px 12px 0 0; width: 361px; }
.tab-title { font-size: 17px; white-space: nowrap; width: 150px; overflow: hidden; }
.tab-title.second { width: 151px; }
.tab-title.fade { width: 229px; letter-spacing: -.05px; -webkit-mask-image: linear-gradient(90deg, #000 200px, transparent 229px); mask-image: linear-gradient(90deg, #000 200px, transparent 229px); }

/* address row */
.toolbar { height: 60px; flex: none; display: flex; align-items: center; background: #f7f7f7; }
.address { width: 1294px; height: 48px; display: flex; align-items: center; background: #fff; border: 2px solid #d2d2d2; border-radius: 24px; }
.url { font-size: 20px; color: #6c6c6c; white-space: nowrap; }
.url b { font-weight: 400; color: #111; }

/* youtube page */
.page { position: relative; height: 891px; flex: none; margin: 0 6px; background: #0f0f0f; border-radius: 12px; overflow: hidden; font-family: Roboto, sans-serif; }
.masthead { height: 84px; width: 1885px; display: flex; align-items: center; padding-right: 24px; }
.wordmark { font: 700 36px Roboto, sans-serif; fill: #fff; }
.country { font: 15px Roboto, sans-serif; fill: #aaa; }
.search-box { margin-left: 192px; width: 805px; height: 60px; border: 1px solid #303030; border-radius: 30px 0 0 30px; background: #121212; color: #7a7a7a; font-size: 24px; line-height: 60px; padding-left: 23px; }
.search-btn { width: 95px; height: 60px; background: #222; border: 1px solid #303030; border-left: 0; border-radius: 0 30px 30px 0; display: flex; align-items: center; padding-left: 32px; }
.mic { width: 60px; height: 60px; margin-left: 24px; border-radius: 50%; background: #272727; display: flex; align-items: center; justify-content: center; }
.signin { width: 147px; height: 54px; border: 1px solid #555; border-radius: 27px; display: flex; align-items: center; gap: 10px; padding-left: 16px; color: #fff; font-size: 21px; font-weight: 500; white-space: nowrap; }

.player { position: relative; width: 1885px; height: 720px; background: #000; }
.frame { width: 1280px; height: 720px; margin-left: 303px; display: flex; flex-direction: column; overflow: hidden; background: #f9f9f9; font-family: "Open Sans", "Noto Sans", sans-serif; color: #333; }
.p-title { height: 26px; flex: none; display: flex; align-items: center; background: linear-gradient(90deg, #f3f3f3 35%, #f2f2f9 50%, #f2f2f9 65%, #f3f3f3 75%); font-size: 10px; letter-spacing: -.15px; }
.p-menu { height: 34px; flex: none; display: flex; align-items: center; background: linear-gradient(90deg, #f3f3f3 35%, #f2f2f9 50%, #f2f2f9 65%, #f3f3f3 75%); font-size: 11px; border-bottom: 1px solid #ececec; padding-left: 12px; }
.m-file { width: 41px; }
.m-view { width: 34px; }
.ribbon { height: 99px; flex: none; display: flex; background: #fafafa; border-bottom: 1px solid #ebebeb; }
.group { display: flex; flex-direction: column; align-items: center; border-right: 1px solid #f2f2f2; overflow: hidden; font-size: 10px; letter-spacing: -.1px; color: #666; }
.group label { line-height: 17px; }
.g-clip { width: 88px; }
.g-img { width: 126px; }
.g-tools { width: 114px; }
.g-brush { width: 58px; }
.g-shapes { width: 230px; }
.g-size { width: 47px; }
.g-col { width: 312px; border: 0; }
.wheel { width: 21px; height: 21px; border-radius: 50%; background: radial-gradient(circle, #fff 0, transparent 65%), conic-gradient(#9f0, #0f9, #0cf, #05f, #b0f, #f0a, #f30, #fd0, #9f0); }

.canvas { position: relative; height: 491px; flex: none; display: flex; padding-left: 27px; padding-right: 5px; }
.sheet { width: 622px; height: 467px; overflow: hidden; background: #fff; border-left: 1.5px solid #a5d3aa; font-family: Roboto, sans-serif; font-size: 13.8px; line-height: 23.2px; color: #303a48; letter-spacing: .17px; }
.row { display: flex; border-bottom: 2px solid #6aaf75; }
.row p { padding: 11.2px 0 11.2px 8px; width: 344px; white-space: nowrap; }
.row p + p { border-left: 2px solid #6aaf75; width: 277px; padding-left: 8px; letter-spacing: .08px; }
.row.head { height: 25px; background: #c4e6d8; overflow: hidden; }
.row.head p { padding: 0 0 0 7px; line-height: 15px; }
.row.first p { padding: 12.2px 0 10.800px 8px; }
.row.alt { background: #eaeaea; }
.row.last { height: 68px; border-bottom: 0; }
.vscroll { width: 4px; height: 432px; margin-top: 50px; background: #7a7a7a; border-radius: 2px; }
.ink { position: absolute; left: 0; top: -1px; fill: none; }
.p-status { height: 30px; flex: none; display: flex; align-items: center; padding-top: 5px; font-size: 10px; background: #f7f7f7; color: #333; white-space: nowrap; }
.p-status svg { margin-top: -5px; }
.s-pos { width: 47px; }
.s-dim { width: 54px; }
.s-zoom { margin-right: 1px; }
.p-task { height: 40px; flex: none; display: flex; align-items: center; background: #202020; color: #e8e8e8; font-size: 10px; line-height: 13.5px; padding-right: 16px; }
.weather { width: 348px; }
.dim { color: #b0b0b0; }
.lang { text-align: center; width: 37px; }
.clock { text-align: right; width: 51px; white-space: nowrap; font-size: 9.600px; letter-spacing: -.1px; }

/* player overlay */
.shade { position: absolute; inset: 0; background: linear-gradient(transparent 54%, rgba(0,0,0,.05) 62%, rgba(0,0,0,.14) 71%, rgba(0,0,0,.23) 80%, rgba(0,0,0,.29) 88%, rgba(0,0,0,.36) 91%, rgba(0,0,0,.48) 94.4%, rgba(0,0,0,.72) 100%); }
.watermark { position: absolute; left: 1807px; top: 569px; width: 60px; height: 60px; background: #003478; }
.mark { font: 5.500px Roboto, sans-serif; fill: #c3d0e6; }
.controls { position: absolute; left: 18px; top: 643px; width: 1848px; }
.progress { position: relative; height: 6px; display: flex; gap: 3px; }
.progress i { background: rgba(255,255,255,.2); height: 6px; }
.c1 { width: 546px; }
.c2 { width: 314px; }
.c3 { width: 477px; }
.c4 { flex: 1; }
.progress b { position: absolute; left: 0; top: 0; height: 6px; }
.loaded { width: 391px; background: rgba(255,255,255,.4); }
.played { width: 234px; background: linear-gradient(90deg, #ff0033 80%, #ff2791); }
.progress .knob { left: 224px; top: -7px; width: 20px; height: 20px; border-radius: 50%; background: #ff0033; }
.buttons { display: flex; align-items: center; height: 56px; margin-top: 7px; color: #e8e8e8; font-size: 19.5px; white-space: nowrap; }
.time { width: 115px; color: #ddd; padding-bottom: 1px; }
.bullet { width: 15px; font-size: 18px; }
.chap { width: 139px; }
.hd { font: 700 11px Roboto, sans-serif; fill: #fff; }

/* below the player */
.below { display: flex; width: 1885px; height: 87px; }
.info { width: 1080px; padding: 20px 0 0 36px; flex: none; }
h1 { font-size: 30px; line-height: 38px; font-weight: 700; color: #f1f1f1; white-space: nowrap; }
.owner { display: flex; align-items: flex-start; padding: 14px 36px 0 0; height: 80px; }
.avatar { width: 60px; height: 60px; border-radius: 50%; background: radial-gradient(circle, #0047ab 23px, #dfe8f5 23.5px, #0047ab 25px); }
.channel { margin: 5px 0 0 18px; width: 273px; font-size: 24px; font-weight: 500; color: #f1f1f1; white-space: nowrap; }
.pill { height: 54px; margin-top: 5px; border-radius: 27px; background: #272727; }
.sub { width: 145px; margin-left: 1px; background: #f1f1f1; }
.like { width: 176px; }
.share { width: 141px; margin-left: 10px; }
.more { width: 54px; margin-left: 10px; }
.chapters { width: 603px; height: 120px; margin-top: 36px; border: 1px solid #3f3f3f; border-radius: 18px; background: #212121; display: flex; justify-content: space-between; align-items: flex-start; padding: 24px 19px 0 24px; color: #f1f1f1; font-size: 30px; line-height: 38px; font-weight: 700; letter-spacing: -.2px; }
.chapters svg { margin-top: 6px; }
.scrollbar { position: absolute; right: 0; top: 0; width: 23px; }

/* windows taskbar */
.taskbar { height: 72px; margin-top: 6px; flex: none; display: flex; align-items: center; padding: 0 29px 0 500px; border-top: 2px solid #b2b6c4; background: linear-gradient(90deg, #d6deee, #dadaed 45%, #dadaee); }
.tb-search { width: 327px; height: 47px; border-radius: 24px; background: #f4f6fc; border: 1px solid #c8cad9; border-bottom-width: 2px; display: flex; align-items: center; padding-left: 16px; padding-right: 1px; font-size: 19.5px; color: #555; }
.tb-search span { margin-left: 14px; flex: 1; }
.badge { width: 78px; height: 39px; border-radius: 20px; background: #8f8f8f; }
.cogn { font: 600 11px "Open Sans", sans-serif; fill: #1c1c60; }
.edge { width: 56px; height: 58px; border-radius: 6px; background: #ebecf6; box-shadow: 0 1px 1px #c5c6d8; }
.letter { font: 700 14px "Open Sans", sans-serif; fill: #fff; }
.tb-lang { width: 60px; margin-right: 3px; text-align: center; font-size: 17.5px; line-height: 23px; padding-bottom: 1px; }
.tb-clock { width: 106px; text-align: right; font-size: 17.800px; line-height: 24px; padding-bottom: 2px; }
```
